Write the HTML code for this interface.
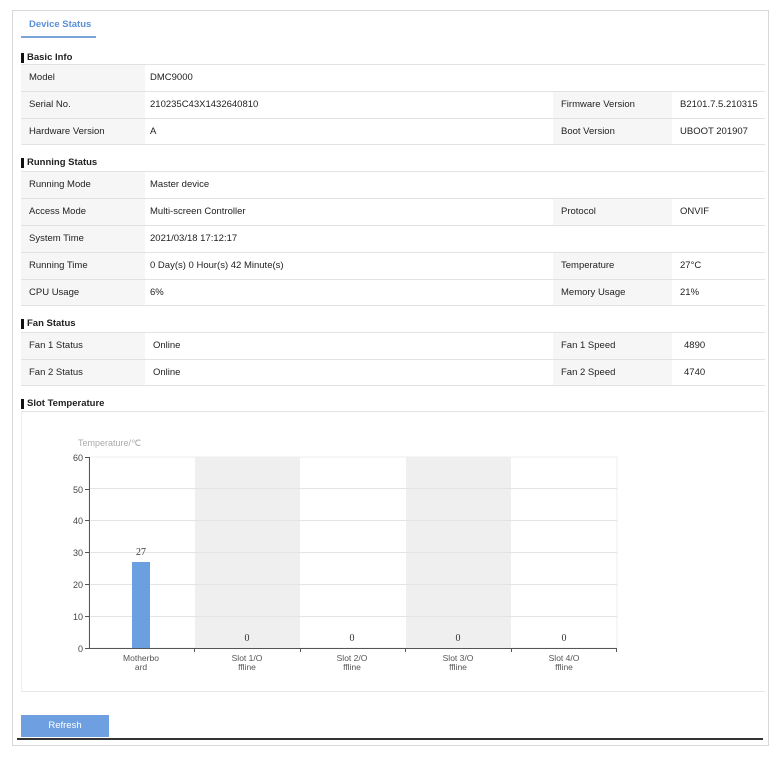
<!DOCTYPE html>
<html><head><meta charset="utf-8"><style>
*{margin:0;padding:0;box-sizing:border-box}
body{width:782px;height:759px;background:#fff;font-family:"Liberation Sans",sans-serif;font-size:9.5px;color:#222;position:relative;overflow:hidden}
.a{position:absolute}
.frame{left:12px;top:10px;width:757px;height:736px;border:1px solid #d8d8d8}
.tab{left:29px;top:19px;color:#5b8fd6;font-weight:bold;font-size:9.5px}
.tabl{left:21px;top:36px;width:75px;height:2px;background:#7aa3d8}
.h{left:21px;font-weight:bold;font-size:9.5px;border-left:3px solid #111;padding-left:3px;line-height:10px}
.row{left:21px;width:744px;height:27px;border-top:1px solid #e2e2e2}
.row.last{border-bottom:1px solid #e2e2e2}
.l1{position:absolute;left:0;top:0;width:124px;height:100%;background:#f6f6f6;padding-left:8px;line-height:26px}
.v1{position:absolute;left:129px;top:0;line-height:26px}
.l2{position:absolute;left:532px;top:0;width:119px;height:100%;background:#f6f6f6;padding-left:8px;line-height:26px}
.v2{position:absolute;left:659px;top:0;line-height:26px}
.btn{left:21px;top:715px;width:88px;height:22px;background:#6e9fe0;color:#fff;text-align:center;line-height:22px;font-size:9.5px}
.bl{left:17px;top:738px;width:746px;height:2px;background:#333}
</style></head><body>
<div class="a frame"></div>
<div class="a tab">Device Status</div>
<div class="a tabl"></div>

<div class="a h" style="top:53px">Basic Info</div>
<div class="a row" style="top:64px"><div class="l1">Model</div><div class="v1">DMC9000</div></div>
<div class="a row" style="top:91px"><div class="l1">Serial No.</div><div class="v1">210235C43X1432640810</div><div class="l2">Firmware Version</div><div class="v2">B2101.7.5.210315</div></div>
<div class="a row last" style="top:118px"><div class="l1">Hardware Version</div><div class="v1">A</div><div class="l2">Boot Version</div><div class="v2">UBOOT 201907</div></div>

<div class="a h" style="top:158px">Running Status</div>
<div class="a row" style="top:171px"><div class="l1">Running Mode</div><div class="v1">Master device</div></div>
<div class="a row" style="top:198px"><div class="l1">Access Mode</div><div class="v1">Multi-screen Controller</div><div class="l2">Protocol</div><div class="v2">ONVIF</div></div>
<div class="a row" style="top:225px"><div class="l1">System Time</div><div class="v1">2021/03/18 17:12:17</div></div>
<div class="a row" style="top:252px"><div class="l1">Running Time</div><div class="v1">0 Day(s) 0 Hour(s) 42 Minute(s)</div><div class="l2">Temperature</div><div class="v2">27°C</div></div>
<div class="a row last" style="top:279px"><div class="l1">CPU Usage</div><div class="v1">6%</div><div class="l2">Memory Usage</div><div class="v2">21%</div></div>

<div class="a h" style="top:319px">Fan Status</div>
<div class="a row" style="top:332px"><div class="l1">Fan 1 Status</div><div class="v1" style="left:132px">Online</div><div class="l2">Fan 1 Speed</div><div class="v2" style="left:663px">4890</div></div>
<div class="a row last" style="top:359px"><div class="l1">Fan 2 Status</div><div class="v1" style="left:132px">Online</div><div class="l2">Fan 2 Speed</div><div class="v2" style="left:663px">4740</div></div>

<div class="a h" style="top:399px">Slot Temperature</div>
<div class="a" style="left:21px;top:411px;width:744px;height:281px;border-top:1px solid #e2e2e2;border-bottom:1px solid #e8e8e8;border-left:1px solid #eee"></div>
<svg class="a" style="left:0;top:0" width="782" height="759" font-family="Liberation Sans, sans-serif">
<rect x="195" y="457" width="105" height="191" fill="#efefef"/>
<rect x="406" y="457" width="105" height="191" fill="#efefef"/>
<rect x="89" y="457" width="528" height="191" fill="none" stroke="#eee"/>
<g stroke="#e4e4e4" stroke-width="1">
<line x1="89" y1="488.5" x2="617" y2="488.5"/><line x1="89" y1="520.5" x2="617" y2="520.5"/><line x1="89" y1="552.5" x2="617" y2="552.5"/><line x1="89" y1="584.5" x2="617" y2="584.5"/><line x1="89" y1="616.5" x2="617" y2="616.5"/>
</g>
<g stroke="#555"><line x1="89.5" y1="457" x2="89.5" y2="649"/><line x1="89" y1="648.5" x2="617" y2="648.5"/>
<line x1="85" y1="457.5" x2="89" y2="457.5"/><line x1="85" y1="489.5" x2="89" y2="489.5"/><line x1="85" y1="520.5" x2="89" y2="520.5"/><line x1="85" y1="552.5" x2="89" y2="552.5"/><line x1="85" y1="584.5" x2="89" y2="584.5"/><line x1="85" y1="616.5" x2="89" y2="616.5"/><line x1="85" y1="648.5" x2="89" y2="648.5"/>
<line x1="194.5" y1="648" x2="194.5" y2="652"/><line x1="300.5" y1="648" x2="300.5" y2="652"/><line x1="405.5" y1="648" x2="405.5" y2="652"/><line x1="511.5" y1="648" x2="511.5" y2="652"/><line x1="616.5" y1="648" x2="616.5" y2="652"/></g>
<g font-size="9" fill="#444" text-anchor="end"><text x="83" y="461">60</text><text x="83" y="493">50</text><text x="83" y="524">40</text><text x="83" y="556">30</text><text x="83" y="588">20</text><text x="83" y="620">10</text><text x="83" y="652">0</text></g>
<text x="78" y="446" font-size="9" fill="#aaa">Temperature/℃</text>
<rect x="132" y="562" width="18" height="86" fill="#6a9fe0"/>
<g font-family="Liberation Serif, serif" font-size="10" fill="#333" text-anchor="middle"><text x="141" y="555">27</text><text x="247" y="641">0</text><text x="352" y="641">0</text><text x="458" y="641">0</text><text x="564" y="641">0</text></g>
<g font-size="8.5" fill="#555" text-anchor="middle">
<text x="141" y="661">Motherbo</text><text x="141" y="670">ard</text>
<text x="247" y="661">Slot 1/O</text><text x="247" y="670">ffline</text>
<text x="352" y="661">Slot 2/O</text><text x="352" y="670">ffline</text>
<text x="458" y="661">Slot 3/O</text><text x="458" y="670">ffline</text>
<text x="564" y="661">Slot 4/O</text><text x="564" y="670">ffline</text></g>
</svg>
<div class="a btn">Refresh</div>
<div class="a bl"></div>
</body></html>
